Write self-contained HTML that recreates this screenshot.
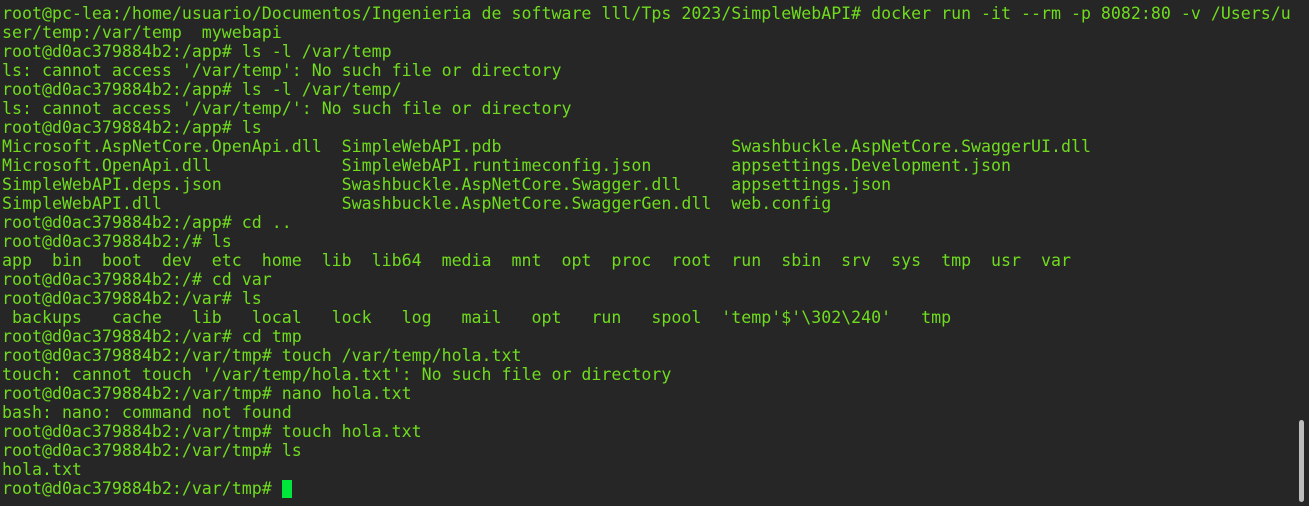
<!DOCTYPE html>
<html><head><meta charset="utf-8"><style>
html,body{margin:0;padding:0;background:#262626;width:1309px;height:506px;overflow:hidden}
pre{margin:0;padding:4px 0 0 2px;font-family:"DejaVu Sans Mono","Liberation Mono",monospace;font-size:16.6px;line-height:19px;color:#6fdc1e;white-space:pre}
.cur{display:inline-block;width:10px;height:18px;background:#00e63a;vertical-align:-4px}
.sb{position:absolute;left:1299px;top:420px;width:5px;height:82px;background:#bdbdbd;border-radius:3px}
</style></head><body><pre>root@pc-lea:/home/usuario/Documentos/Ingenieria de software lll/Tps 2023/SimpleWebAPI# docker run -it --rm -p 8082:80 -v /Users/u
ser/temp:/var/temp  mywebapi
root@d0ac379884b2:/app# ls -l /var/temp
ls: cannot access '/var/temp': No such file or directory
root@d0ac379884b2:/app# ls -l /var/temp/
ls: cannot access '/var/temp/': No such file or directory
root@d0ac379884b2:/app# ls
Microsoft.AspNetCore.OpenApi.dll  SimpleWebAPI.pdb                       Swashbuckle.AspNetCore.SwaggerUI.dll
Microsoft.OpenApi.dll             SimpleWebAPI.runtimeconfig.json        appsettings.Development.json
SimpleWebAPI.deps.json            Swashbuckle.AspNetCore.Swagger.dll     appsettings.json
SimpleWebAPI.dll                  Swashbuckle.AspNetCore.SwaggerGen.dll  web.config
root@d0ac379884b2:/app# cd ..
root@d0ac379884b2:/# ls
app  bin  boot  dev  etc  home  lib  lib64  media  mnt  opt  proc  root  run  sbin  srv  sys  tmp  usr  var
root@d0ac379884b2:/# cd var
root@d0ac379884b2:/var# ls
 backups   cache   lib   local   lock   log   mail   opt   run   spool  'temp'$'\302\240'   tmp
root@d0ac379884b2:/var# cd tmp
root@d0ac379884b2:/var/tmp# touch /var/temp/hola.txt
touch: cannot touch '/var/temp/hola.txt': No such file or directory
root@d0ac379884b2:/var/tmp# nano hola.txt
bash: nano: command not found
root@d0ac379884b2:/var/tmp# touch hola.txt
root@d0ac379884b2:/var/tmp# ls
hola.txt
root@d0ac379884b2:/var/tmp# <span class="cur"></span></pre>
<div class="sb"></div>
</body></html>
